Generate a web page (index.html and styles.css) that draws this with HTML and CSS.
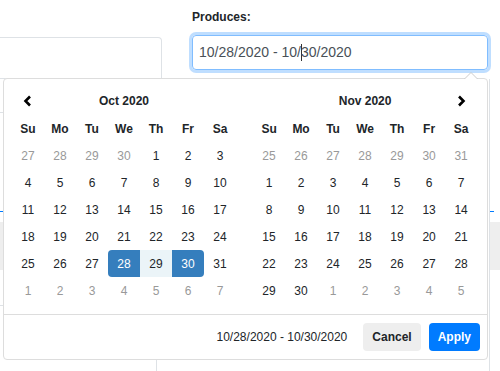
FILE: index.html
```html
<!DOCTYPE html>
<html lang="en">
<head>
    <meta charset="UTF-8">
    <meta name="viewport" content="width=device-width, initial-scale=1.0">
    <title>Produces</title>
    <link rel="stylesheet" href="styles.css">
</head>
<body>
    <div class="page">
        <section class="card">
            <div class="card-head"></div>
            <div class="card-row"></div>
            <div class="card-body">
                <div class="link-line"></div>
                <div class="band"></div>
                <div class="rule"></div>
            </div>
        </section>

        <div class="field">
            <div class="field-label">Produces:</div>
            <div class="field-input">10/28/2020 - 10/<span class="caret"></span>30/2020</div>
        </div>

        <section class="side">
            <div class="link-line"></div>
            <div class="band"></div>
        </section>

        <!-- date range popup -->
        <div class="picker">
            <div class="calendars">
                <table class="cal">
                    <colgroup><col><col><col><col><col><col><col></colgroup>
                    <tr class="month-row">
                        <th class="nav"><svg width="10" height="12" viewBox="0 0 10 12"><polyline points="7,1.5 2.5,6 7,10.5" fill="none" stroke="#000" stroke-width="2.6"/></svg></th>
                        <th colspan="5" class="month">Oct 2020</th>
                        <th></th>
                    </tr>
                    <tr class="week-row">
                        <th>Su</th><th>Mo</th><th>Tu</th><th>We</th><th>Th</th><th>Fr</th><th>Sa</th>
                    </tr>
                    <tr><td class="off">27</td><td class="off">28</td><td class="off">29</td><td class="off">30</td><td>1</td><td>2</td><td>3</td></tr>
                    <tr><td>4</td><td>5</td><td>6</td><td>7</td><td>8</td><td>9</td><td>10</td></tr>
                    <tr><td>11</td><td>12</td><td>13</td><td>14</td><td>15</td><td>16</td><td>17</td></tr>
                    <tr><td>18</td><td>19</td><td>20</td><td>21</td><td>22</td><td>23</td><td>24</td></tr>
                    <tr><td>25</td><td>26</td><td>27</td><td class="active start">28</td><td class="in-range">29</td><td class="active end">30</td><td>31</td></tr>
                    <tr><td class="off">1</td><td class="off">2</td><td class="off">3</td><td class="off">4</td><td class="off">5</td><td class="off">6</td><td class="off">7</td></tr>
                </table>

                <table class="cal">
                    <colgroup><col><col><col><col><col><col><col></colgroup>
                    <tr class="month-row">
                        <th></th>
                        <th colspan="5" class="month">Nov 2020</th>
                        <th class="nav"><svg width="10" height="12" viewBox="0 0 10 12"><polyline points="3,1.5 7.5,6 3,10.5" fill="none" stroke="#000" stroke-width="2.6"/></svg></th>
                    </tr>
                    <tr class="week-row">
                        <th>Su</th><th>Mo</th><th>Tu</th><th>We</th><th>Th</th><th>Fr</th><th>Sa</th>
                    </tr>
                    <tr><td class="off">25</td><td class="off">26</td><td class="off">27</td><td class="off">28</td><td class="off">29</td><td class="off">30</td><td class="off">31</td></tr>
                    <tr><td>1</td><td>2</td><td>3</td><td>4</td><td>5</td><td>6</td><td>7</td></tr>
                    <tr><td>8</td><td>9</td><td>10</td><td>11</td><td>12</td><td>13</td><td>14</td></tr>
                    <tr><td>15</td><td>16</td><td>17</td><td>18</td><td>19</td><td>20</td><td>21</td></tr>
                    <tr><td>22</td><td>23</td><td>24</td><td>25</td><td>26</td><td>27</td><td>28</td></tr>
                    <tr><td>29</td><td>30</td><td class="off">1</td><td class="off">2</td><td class="off">3</td><td class="off">4</td><td class="off">5</td></tr>
                </table>
            </div>

            <div class="buttons">
                <span class="selected">10/28/2020 - 10/30/2020</span>
                <button class="btn btn-cancel">Cancel</button>
                <button class="btn btn-apply">Apply</button>
            </div>
        </div>
    </div>
</body>
</html>
```

FILE: styles.css
```css
body {
    margin: 0;
    background: #fff;
    font-family: 'Liberation Sans', Arial, sans-serif;
    color: #212529;
}

.page {
    position: relative;
    display: flex;
    height: 371px;
    overflow: hidden;
}

/* background card on the left */
.card {
    flex: none;
    width: 162px;
    margin-top: 37px;
}

.card-head {
    height: 40px;
    border-top: 1px solid #dee2e6;
    border-right: 1px solid #dee2e6;
    border-bottom: 1px solid #dee2e6;
    border-radius: 0 4px 0 0;
}

.card-row {
    height: 33px;
    border-right: 1px solid #dee2e6;
    border-bottom: 1px solid #dee2e6;
}

.card-body {
    margin-right: 5px;
    padding-top: 98px;
    height: 300px;
    border-right: 1px solid #dee2e6;
}

.link-line {
    width: 4px;
    height: 1px;
    background: #007bff;
}

.band {
    margin-top: 10px;
    height: 48px;
    background: #eeeeee;
}

.rule {
    margin-top: 35px;
    border-top: 1px solid #dee2e6;
}

/* the date field */
.field {
    flex: none;
    width: 296px;
    margin-left: 30px;
    padding-top: 8px;
}

.field-label {
    font-size: 12px;
    font-weight: bold;
    line-height: 18px;
    margin-bottom: 9px;
}

.field-input {
    box-sizing: border-box;
    height: 35px;
    padding: 0 6px;
    border: 1px solid #80bdff;
    border-radius: 4px;
    box-shadow: 0 0 0 3px rgba(0, 123, 255, 0.25);
    font-size: 14px;
    line-height: 33px;
    color: #495057;
    white-space: nowrap;
}

.caret {
    display: inline-block;
    width: 1px;
    height: 17px;
    margin-right: -1px;
    background: #333;
    vertical-align: -4px;
}

.side {
    flex: 1;
    margin-left: 1px;
    margin-top: 79px;
    border-left: 1px solid #dee2e6;
    padding-top: 132px;
}

/* popup */
.picker {
    position: absolute;
    left: 3px;
    top: 78px;
    width: 485px;
    box-sizing: border-box;
    background: #fff;
    border: 1px solid #ddd;
    border-radius: 4px;
    font-size: 12px;
    line-height: 1;
}

.picker:before,
.picker:after {
    content: '';
    position: absolute;
    width: 0;
    height: 0;
}

.picker:before {
    top: -7px;
    right: 9px;
    border-left: 7px solid transparent;
    border-right: 7px solid transparent;
    border-bottom: 7px solid #ccc;
}

.picker:after {
    top: -6px;
    right: 10px;
    border-left: 6px solid transparent;
    border-right: 6px solid transparent;
    border-bottom: 6px solid #fff;
}

.calendars {
    display: flex;
    gap: 17px;
    padding: 8px 10px 10px 8px;
}

.cal {
    flex: none;
    border-collapse: collapse;
    table-layout: fixed;
    width: 224px;
}

.cal col {
    width: 32px;
}

.cal th,
.cal td {
    height: 27px;
    padding: 0;
    text-align: center;
    white-space: nowrap;
}

.cal th {
    font-weight: bold;
}

.month-row th {
    height: 28px;
}

.nav svg {
    display: block;
    margin: 0 auto;
}

.cal td.off {
    color: #999;
}

.cal td.in-range {
    background: #ebf4f8;
}

.cal td.active {
    background: #357ebd;
    color: #fff;
}

.cal td.start {
    border-radius: 4px 0 0 4px;
}

.cal td.end {
    border-radius: 0 4px 4px 0;
}

.buttons {
    display: flex;
    justify-content: flex-end;
    align-items: center;
    padding: 8px 7px 8px 8px;
    border-top: 1px solid #ddd;
}

.selected {
    padding-right: 8px;
    font-size: 12px;
}

.btn {
    height: 28px;
    margin-left: 8px;
    padding: 0 9px;
    border: 0;
    border-radius: 4px;
    font-family: 'Liberation Sans', Arial, sans-serif;
    font-size: 12px;
    font-weight: bold;
}

.btn-cancel {
    background: #eeeeee;
    color: #212529;
}

.btn-apply {
    background: #007bff;
    color: #fff;
}
```
